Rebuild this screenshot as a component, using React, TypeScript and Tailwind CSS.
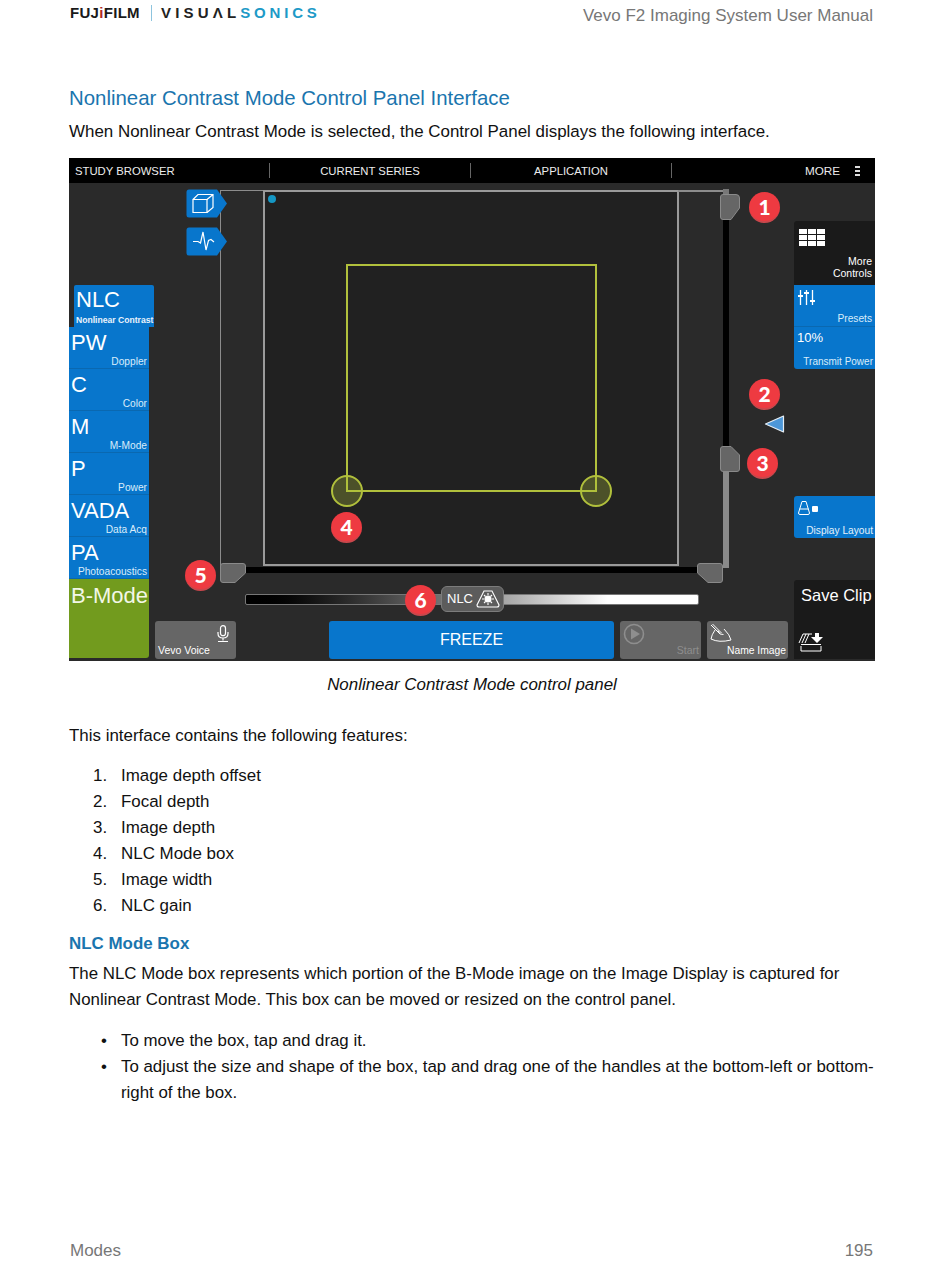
import React from 'react';

const SANS = "font-['Liberation_Sans',Arial,sans-serif]";

const MODE_BUTTONS = [
  { title: 'PW', sub: 'Doppler' },
  { title: 'C', sub: 'Color' },
  { title: 'M', sub: 'M-Mode' },
  { title: 'P', sub: 'Power' },
  { title: 'VADA', sub: 'Data Acq' },
  { title: 'PA', sub: 'Photoacoustics' },
];

const FEATURES = ['Image depth offset', 'Focal depth', 'Image depth', 'NLC Mode box', 'Image width', 'NLC gain'];

const Callout = ({ n, className }: { n: number; className: string }) => (
  <div className={`absolute w-[31px] h-[31px] rounded-full bg-[#ee3a41] border-b-2 border-[#c9474c] flex items-center justify-center text-white text-[21px] font-black font-['Lato',sans-serif] ${className}`}>
    {n}
  </div>
);

const TabIcon = ({ children, className }: { children: React.ReactNode; className: string }) => (
  <svg className={`absolute ${className}`} width="42" height="29" viewBox="0 0 42 29">
    <path d="M3 0.5H31L41 14.5L31 28.5H3Q0.5 28.5 0.5 26V3Q0.5 0.5 3 0.5Z" fill="#0876cc" />
    {children}
  </svg>
);

// corner drag handles on the image frame, chamfered on one corner
const Handle = ({ d, className }: { d: string; className: string }) => (
  <svg className={`absolute ${className}`} width="26" height="26" viewBox="0 0 26 26">
    <path d={d} fill="#666" stroke="#8a8a8a" strokeWidth="1" />
  </svg>
);

const DarkButton = ({ children, w }: { children: React.ReactNode; w: string }) => (
  <div className={`relative h-[38px] rounded-[3px] bg-[#666] text-white ${w}`}>{children}</div>
);

const ControlPanel = () => (
  <div className={`flex flex-col w-[806px] h-[503px] mt-[13px] bg-[#2a2a2a] ${SANS}`}>
    <div className="flex items-center h-[25px] bg-black text-[#ececec] text-[11.3px] shrink-0">
      <div className="w-[201px] h-[15px] pl-[6px] leading-[17px] border-r border-[#666]">STUDY BROWSER</div>
      <div className="w-[201px] h-[15px] text-center leading-[17px] border-r border-[#666]">CURRENT SERIES</div>
      <div className="w-[201px] h-[15px] text-center leading-[17px] border-r border-[#666]">APPLICATION</div>
      <div className="flex-1 flex justify-end items-center pr-[15px]">
        <span className="mr-[15px] text-[11.7px] leading-[17px]">MORE</span>
        <div className="flex flex-col gap-[2px] w-[5px]">
          <div className="h-[2px] bg-[#ddd]" />
          <div className="h-[2px] bg-[#ddd]" />
          <div className="h-[2px] bg-[#ddd]" />
        </div>
      </div>
    </div>

    <div className="flex flex-1">
      {/* left mode column */}
      <div className="w-[86px] pt-[102px] flex flex-col shrink-0">
        <div className="relative ml-[5px] w-[80px] h-[42px] bg-[#0876cc] rounded-t-[2px] text-white">
          <div className="pl-[2px] pt-[2px] text-[22px] leading-[26px]">NLC</div>
          <div className="absolute left-[2px] bottom-[1px] text-[8.6px] leading-[12px] font-bold text-[#e8f3fc] whitespace-nowrap">Nonlinear Contrast</div>
        </div>
        {MODE_BUTTONS.map(b => (
          <div key={b.title} className="relative w-[80px] h-[42px] bg-[#0876cc] border-b border-[#0a68b0] text-white">
            <div className="pl-[2px] pt-[3px] text-[22px] leading-[26px]">{b.title}</div>
            <div className="absolute right-[2px] bottom-0 text-[10.2px] leading-[13px] text-[#d9ecfa] whitespace-nowrap">{b.sub}</div>
          </div>
        ))}
        <div className="w-[80px] h-[79px] bg-[#729b1e] rounded-br-[3px] pl-[2px] pt-[4px] text-[22px] leading-[26px] text-[#f2f7e6]">B-Mode</div>
      </div>

      {/* centre: image canvas with the callouts over it, buttons below */}
      <div className="relative flex-1 flex flex-col justify-end pb-[2px]">
        <div className="absolute left-[65px] top-[7px] w-[503px] h-[380px] border-l border-t border-[#8c8c8c]" />
        <div className="absolute left-[108px] top-[7px] w-[416px] h-[376px] bg-[#212121] border-2 border-[#9a9a9a]" />
        <div className="absolute left-[113px] top-[12px] w-[8px] h-[8px] rounded-full bg-[#1597c4]" />

        <TabIcon className="left-[31px] top-[6px]">
          <g fill="none" stroke="#fff" strokeWidth="1.2">
            <path d="M7 10.5H21V23.5H7Z" />
            <path d="M7 10.5L12 5.5H27V18.5L21 23.5M21 10.5L27 5.5" />
          </g>
        </TabIcon>
        <TabIcon className="left-[31px] top-[44px]">
          <path d="M7 14.5H12L14.5 16L17 5L20 23L22.5 13.5L25 12.5L28 15" fill="none" stroke="#fff" strokeWidth="1.2" />
        </TabIcon>

        {/* NLC mode box */}
        <div className="absolute left-[191px] top-[81px] w-[251px] h-[228px] border-2 border-[#b1c03c]" />
        <div className="absolute left-[176px] top-[292px] w-[32px] h-[32px] rounded-full border-2 border-[#b1c03c] bg-[#b1c03c]/30" />
        <div className="absolute left-[425px] top-[292px] w-[32px] h-[32px] rounded-full border-2 border-[#b1c03c] bg-[#b1c03c]/30" />

        {/* width and depth rails */}
        <div className="absolute left-[90px] top-[384px] w-[470px] h-[6px] bg-black" />
        <div className="absolute left-[568px] top-[37px] w-[6px] h-[228px] bg-black" />
        <div className="absolute left-[568px] top-[285px] w-[6px] h-[100px] bg-[#8a8a8a]" />
        <div className="absolute left-[523px] top-[7px] w-[46px] h-[2px] bg-[#8c8c8c]" />
        <div className="absolute left-[568px] top-[6px] w-[6px] h-[6px] bg-[#777]" />

        <Handle className="left-[565px] top-[11px]" d="M3 0.5H16Q19.5 0.5 19.5 4V14L11 25.5H3Q0.5 25.5 0.5 23V3Q0.5 0.5 3 0.5Z" />
        <Handle className="left-[565px] top-[263px]" d="M3 0.5H11L19.5 9V23Q19.5 25.5 17 25.5H3Q0.5 25.5 0.5 23V3Q0.5 0.5 3 0.5Z" />
        <Handle className="left-[65px] top-[380px]" d="M3 0.5H23Q25.5 0.5 25.5 3V10L15 19.5H3Q0.5 19.5 0.5 17V3Q0.5 0.5 3 0.5Z" />
        <Handle className="left-[542px] top-[380px]" d="M3 0.5H23Q25.5 0.5 25.5 3V17Q25.5 19.5 23 19.5H11L0.5 10V3Q0.5 0.5 3 0.5Z" />

        {/* focal depth marker */}
        <svg className="absolute left-[609px] top-[231px]" width="22" height="20" viewBox="0 0 22 20">
          <path d="M1.5 10L19.5 2V18Z" fill="#4d97d8" stroke="#e6eef5" strokeWidth="1.2" strokeLinejoin="round" />
        </svg>

        {/* gain slider */}
        <div className="absolute left-[90px] top-[411px] w-[454px] h-[11px] rounded-[2px] border border-[#777] bg-gradient-to-r from-black via-[#8c8c8c] via-50% to-white to-80%" />
        <div className="absolute left-[286px] top-[403px] w-[63px] h-[26px] rounded-[6px] bg-[#5c5c5c] border border-[#7c7c7c] flex items-center pl-[5px] text-white text-[13px]">
          <span>NLC</span>
          <svg className="ml-[3px]" width="24" height="20" viewBox="0 0 24 20" fill="none" stroke="#fff" strokeWidth="1.1">
            <path d="M8 2H16L23 16Q23 18 21 18H3Q1 18 1 16Z" />
            <circle cx="12" cy="10" r="3" fill="#fff" />
            <path d="M12 4V6M12 14V16M6 10H8M16 10H18M8 6L9.5 7.5M16 6L14.5 7.5M8 14L9.5 12.5M16 14L14.5 12.5" />
          </svg>
        </div>

        <Callout n={1} className="left-[594px] top-[9px]" />
        <Callout n={2} className="left-[594px] top-[196px]" />
        <Callout n={3} className="left-[592px] top-[265px]" />
        <Callout n={4} className="left-[176px] top-[329px]" />
        <Callout n={5} className="left-[30px] top-[377px]" />
        <Callout n={6} className="left-[250px] top-[402px]" />

        {/* bottom buttons */}
        <div className="flex pr-[6px]">
          <DarkButton w="w-[81px]">
            <span className="absolute left-[3px] bottom-[2px] text-[10.5px] leading-[13px]">Vevo Voice</span>
            <svg className="absolute right-[6px] top-[4px]" width="14" height="18" viewBox="0 0 14 18" fill="none" stroke="#fff" strokeWidth="1.2">
              <rect x="4.5" y="0.7" width="5" height="10" rx="2.5" />
              <path d="M2 7V8.5Q2 13 7 13Q12 13 12 8.5V7M7 13V15.5M2 16.5H12" />
            </svg>
          </DarkButton>
          <div className="ml-[93px] w-[285px] h-[38px] rounded-[3px] bg-[#0876cc] flex items-center justify-center text-white text-[16px]">FREEZE</div>
          <div className="ml-[6px]">
            <DarkButton w="w-[81px]">
              <svg className="absolute left-[3px] top-[2px]" width="22" height="22" viewBox="0 0 22 22">
                <circle cx="11" cy="11" r="9.5" fill="none" stroke="#8e8e8e" strokeWidth="1.6" />
                <path d="M8 5.5L17 11L8 16.5Z" fill="#8e8e8e" />
              </svg>
              <span className="absolute right-[2px] bottom-[2px] text-[10.5px] leading-[13px] text-[#8e8e8e]">Start</span>
            </DarkButton>
          </div>
          <div className="ml-[6px]">
            <DarkButton w="w-[81px]">
              <svg className="absolute left-[2px] top-[3px]" width="24" height="20" viewBox="0 0 24 20" fill="none" stroke="#fff" strokeWidth="1">
                <path d="M2 1L11 10M3.5 0L12.5 9M11 10L9 6.5M11 10L14.5 10.5" />
                <path d="M6 6Q2.5 11 2 15Q10 19 22 16Q21 11 15 5" />
              </svg>
              <span className="absolute right-[2px] bottom-[2px] text-[10.3px] leading-[13px] whitespace-nowrap">Name Image</span>
            </DarkButton>
          </div>
        </div>
      </div>

      {/* right column */}
      <div className="w-[81px] pt-[38px] flex flex-col shrink-0">
        <div className="relative h-[64px] bg-[#1a1a1a] rounded-tl-[3px] text-white">
          <div className="absolute left-[5px] top-[8px] grid grid-cols-3 gap-[1px] w-[26px]">
            {Array.from({ length: 9 }).map((_, i) => <div key={i} className="h-[5px] bg-white" />)}
          </div>
          <div className="absolute right-[3px] bottom-[6px] text-right text-[10.5px] leading-[12px]">More<br />Controls</div>
        </div>
        <div className="relative h-[42px] bg-[#0876cc] border-b border-[#0a68b0] text-[#d9ecfa]">
          <svg className="absolute left-[4px] top-[5px]" width="18" height="15" viewBox="0 0 18 15" fill="none" stroke="#fff" strokeWidth="1.3">
            <path d="M2.5 0V15M8.5 0V15M14.5 0V15" />
            <path d="M0 6H5M6 3H11M12 11H17" strokeWidth="2" />
          </svg>
          <span className="absolute right-[3px] bottom-[1px] text-[10.2px] leading-[13px]">Presets</span>
        </div>
        <div className="relative h-[42px] bg-[#0876cc] rounded-bl-[3px] text-white">
          <span className="absolute left-[3px] top-[3px] text-[13px] leading-[16px]">10%</span>
          <span className="absolute right-[2px] bottom-[1px] text-[10px] leading-[13px] text-[#d9ecfa] whitespace-nowrap">Transmit Power</span>
        </div>
        <div className="relative mt-[127px] h-[42px] bg-[#0876cc] rounded-l-[3px] text-[#e3f1fb]">
          <svg className="absolute left-[3px] top-[4px]" width="22" height="16" viewBox="0 0 22 16">
            <path d="M5 1.5H9L12.5 13Q12.5 14.5 11 14.5H3Q1.5 14.5 1.5 13Z M2.5 9H11.5" fill="none" stroke="#fff" strokeWidth="1" />
            <rect x="15" y="6" width="6" height="6" rx="1" fill="#fff" />
          </svg>
          <span className="absolute right-[2px] bottom-[1px] text-[10.2px] leading-[13px] whitespace-nowrap">Display Layout</span>
        </div>
        <div className="relative mt-[42px] h-[79px] bg-[#1a1a1a] rounded-tl-[3px] text-white">
          <div className="pl-[7px] pt-[5px] text-[16.5px] leading-[20px] whitespace-nowrap">Save Clip</div>
          <svg className="absolute left-[4px] bottom-[7px]" width="26" height="19" viewBox="0 0 26 19" fill="none" stroke="#fff" strokeWidth="1">
            <path d="M1 10L5 1H14M4 10L8 1M7 10L11 1" />
            <path d="M17 0H21V4H25L19 10L13 4H17Z" fill="#fff" stroke="none" />
            <path d="M3 11.5H23M3 13V18H23V13" />
          </svg>
        </div>
      </div>
    </div>
  </div>
);

export default function App() {
  return (
    <div className={`relative w-[950px] h-[1261px] bg-white text-[#111] flex flex-col pl-[69px] pr-[75px] ${SANS}`}>
      <header className="flex justify-between h-[30px] shrink-0 pr-[2px]">
        <div className="flex items-start pt-[4px] pl-[1px]">
          <span className="text-[15px] leading-[18px] font-bold tracking-[0.3px] text-[#1a1a1a]">FUJ<span className="text-[#b02a2a]">i</span>FILM</span>
          <div className="ml-[11px] mt-[1px] w-px h-[16px] bg-[#8dc4de]" />
          <span className="ml-[9px] text-[15px] leading-[18px] font-bold tracking-[4.2px] text-[#222]">VISU&Lambda;L</span>
          <span className="text-[15px] leading-[18px] font-bold tracking-[3.8px] text-[#1d9ac7]">SONICS</span>
        </div>
        <div className="pt-[6px] text-[17px] leading-[20px] text-[#777]">Vevo F2 Imaging System User Manual</div>
      </header>

      <h1 className="mt-[55px] text-[20.4px] leading-[26px] text-[#1a75ae] font-normal">Nonlinear Contrast Mode Control Panel Interface</h1>
      <p className="mt-[8px] text-[16.93px] leading-[26px]">When Nonlinear Contrast Mode is selected, the Control Panel displays the following interface.</p>

      <ControlPanel />

      <p className="mt-[11px] w-[806px] text-center text-[16.93px] leading-[26px] italic">Nonlinear Contrast Mode control panel</p>

      <p className="mt-[25px] text-[16.93px] leading-[26px]">This interface contains the following features:</p>

      <ol className="mt-[14px] text-[16.93px] leading-[26px]">
        {FEATURES.map((f, i) => (
          <li key={f} className="flex">
            <span className="w-[52px] pl-[24px] shrink-0">{i + 1}.</span>
            <span>{f}</span>
          </li>
        ))}
      </ol>

      <h2 className="mt-[12px] text-[16.93px] leading-[26px] font-bold text-[#1a75ae]">NLC Mode Box</h2>
      <p className="mt-[4px] text-[16.87px] leading-[26px]">
        The NLC Mode box represents which portion of the B-Mode image on the Image Display is captured for<br />
        Nonlinear Contrast Mode. This box can be moved or resized on the control panel.
      </p>

      <ul className="mt-[15px] text-[16.87px] leading-[26px]">
        <li className="flex">
          <span className="w-[52px] pl-[32px] shrink-0">•</span>
          <span>To move the box, tap and drag it.</span>
        </li>
        <li className="flex">
          <span className="w-[52px] pl-[32px] shrink-0">•</span>
          <span className="whitespace-nowrap">To adjust the size and shape of the box, tap and drag one of the handles at the bottom-left or bottom-<br />right of the box.</span>
        </li>
      </ul>

      <footer className="mt-auto pl-[1px] pr-[2px] flex justify-between h-[20px] text-[17px] leading-[20px] text-[#777]">
        <span>Modes</span>
        <span>195</span>
      </footer>
    </div>
  );
}
